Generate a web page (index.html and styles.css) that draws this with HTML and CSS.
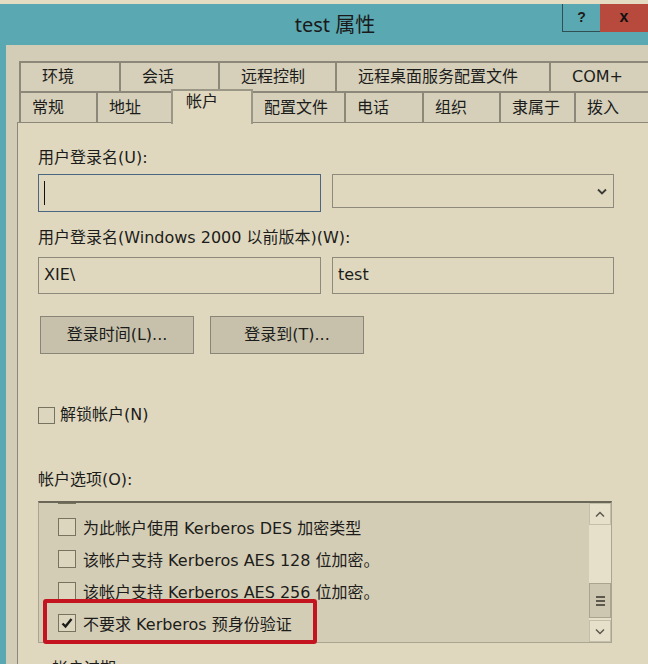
FILE: index.html
```html
<!DOCTYPE html>
<html lang="zh-CN">
<head>
<meta charset="utf-8">
<title>test 属性</title>
<link rel="stylesheet" href="styles.css">
</head>
<body>
<div class="window">
  <div class="topstrip"></div>
  <div class="titlebar">
    <div class="title">test 属性</div>
    <div class="controls">
      <div class="btn-help">?</div>
      <div class="btn-close">x</div>
    </div>
  </div>
  <div class="frame">
    <div class="tabs">
      <div class="tabrow row1">
        <div class="tab w-env">环境</div>
        <div class="tab w-sess">会话</div>
        <div class="tab w-rc">远程控制</div>
        <div class="tab w-rds">远程桌面服务配置文件</div>
        <div class="tab w-com">COM+</div>
      </div>
      <div class="tabrow row2">
        <div class="tab w-gen">常规</div>
        <div class="tab w-addr">地址</div>
        <div class="tab tab-active w-acct">帐户</div>
        <div class="tab w-prof">配置文件</div>
        <div class="tab w-tel">电话</div>
        <div class="tab w-org">组织</div>
        <div class="tab w-mem">隶属于</div>
        <div class="tab w-dial">拨入</div>
      </div>
    </div>
    <div class="panel">
      <div class="label first">用户登录名(U):</div>
      <div class="field-row">
        <div class="input input-focus"><span class="caret"></span></div>
        <div class="input combo">
          <svg class="chev" width="10" height="7" viewBox="0 0 10 7"><path d="M1 1.5 L5 5.5 L9 1.5" fill="none" stroke="#3c3a34" stroke-width="1.8"/></svg>
        </div>
      </div>
      <div class="label second">用户登录名(Windows 2000 以前版本)(W):</div>
      <div class="field-row row-pre">
        <div class="input input-text">XIE\</div>
        <div class="input input-text">test</div>
      </div>
      <div class="button-row">
        <div class="button">登录时间(L)...</div>
        <div class="button">登录到(T)...</div>
      </div>
      <div class="check-row">
        <span class="box"></span><span>解锁帐户(N)</span>
      </div>
      <div class="label options">帐户选项(O):</div>
      <div class="listbox">
        <div class="items">
          <div class="items-inner">
            <div class="item"><span class="box"></span></div>
            <div class="item"><span class="box"></span><span>为此帐户使用 Kerberos DES 加密类型</span></div>
            <div class="item"><span class="box"></span><span>该帐户支持 Kerberos AES 128 位加密。</span></div>
            <div class="item"><span class="box"></span><span>该帐户支持 Kerberos AES 256 位加密。</span></div>
            <div class="item"><span class="box checked"><svg width="16" height="16" viewBox="0 0 16 16"><path d="M3.5 8.5 L6.5 11.5 L12.5 4" fill="none" stroke="#1b1b1b" stroke-width="2.4"/></svg></span><span>不要求 Kerberos 预身份验证</span></div>
          </div>
        </div>
        <div class="scrollbar">
          <div class="sb-btn"><svg width="10" height="7" viewBox="0 0 10 7"><path d="M1 5.5 L5 1.5 L9 5.5" fill="none" stroke="#5c584d" stroke-width="1.5"/></svg></div>
          <div class="sb-track">
            <div class="sb-thumb"><span class="grip"></span><span class="grip"></span><span class="grip"></span></div>
          </div>
          <div class="sb-btn"><svg width="10" height="7" viewBox="0 0 10 7"><path d="M1 1.5 L5 5.5 L9 1.5" fill="none" stroke="#5c584d" stroke-width="1.5"/></svg></div>
        </div>
        <div class="highlight"></div>
      </div>
      <div class="label expire">帐户过期</div>
    </div>
  </div>
</div>
</body>
</html>
```

FILE: styles.css
```css
* { box-sizing: border-box; }
html, body { margin: 0; padding: 0; }
body {
  width: 648px;
  height: 664px;
  overflow: hidden;
  background: #5aa8b1;
  font-family: "DejaVu Sans", "Noto Sans CJK SC", sans-serif;
  font-size: 16px;
  color: #1c1c1a;
}
.window {
  width: 648px;
  height: 664px;
  display: flex;
  flex-direction: column;
  overflow: hidden;
}
.topstrip {
  height: 4px;
  background: #e4dcc3;
  flex: none;
}
.titlebar {
  height: 41px;
  flex: none;
  display: flex;
  background: #5aa8b1;
}
.title {
  flex: 1;
  text-align: center;
  padding-left: 108px;
  padding-top: 7px;
  font-family: "Noto Sans", "Noto Sans CJK SC", sans-serif;
  font-size: 20px;
  line-height: 28px;
  color: #1a1a1a;
}
.controls {
  display: flex;
  align-self: flex-start;
  height: 28px;
}
.btn-help {
  width: 38px;
  height: 28px;
  border-left: 1px solid #2f4f53;
  border-bottom: 1px solid #2f4f53;
  background: #5aa8b1;
  font-family: "Liberation Sans", sans-serif;
  font-weight: bold;
  font-size: 14px;
  line-height: 26px;
  text-align: center;
}
.btn-close {
  width: 48px;
  height: 28px;
  background: #b84a3d;
  font-family: "Liberation Sans", sans-serif;
  font-weight: bold;
  font-size: 16px;
  line-height: 26px;
  text-align: center;
  color: #111;
}
.frame {
  flex: 1;
  margin-left: 6px;
  background: #d3ccb7;
  display: flex;
  flex-direction: column;
}
.tabs {
  padding-top: 16px;
  padding-left: 13px;
}
.tabrow {
  display: flex;
  white-space: nowrap;
}
.tab {
  flex: none;
  border-top: 2px solid #8b8779;
  border-left: 2px solid #8b8779;
  background: #d6d0bb;
  line-height: 28px;
}
.row1 .tab {
  height: 30px;
  padding-left: 21px;
}
.row2 {
  height: 31px;
  align-items: flex-start;
}
.row2 .tab {
  height: 31px;
  padding-left: 11px;
  line-height: 29px;
}
.row2 .tab-active {
  position: relative;
  z-index: 1;
  height: 35px;
  margin-top: -2px;
  padding-left: 13px;
  line-height: 22px;
  background: #dfd8bf;
  border-top: 2px solid #9b9787;
  border-left: 2px solid #9b9787;
  border-right: 2px solid #9b9787;
}
.row2 .tab-active + .tab { border-left: none; }
.w-env { width: 100px; }
.w-sess { width: 99px; }
.w-rc { width: 117px; }
.w-rds { width: 214px; }
.w-com { width: 110px; }
.w-gen { width: 77px; }
.w-addr { width: 75px; }
.w-acct { width: 82px; }
.w-prof { width: 91px; }
.w-tel { width: 78px; }
.w-org { width: 77px; }
.w-mem { width: 75px; }
.w-dial { width: 80px; }
.panel {
  flex: 1;
  margin-left: 11px;
  border-top: 1px solid #8b8779;
  border-left: 1px solid #8b8779;
  background: #dfd8bf;
  padding-left: 20px;
  padding-top: 24px;
}
.label {
  line-height: 22px;
  white-space: nowrap;
}
.label.second { margin-top: 15px; }
.label.options { margin-top: 43px; }
.label.expire { margin-top: 15px; padding-left: 14px; }
.field-row {
  display: flex;
  gap: 11px;
  align-items: flex-start;
  margin-top: 5px;
}
.field-row.row-pre { margin-top: 8px; }
.input {
  border: 1px solid #8e8a7b;
  background: #dfd8bf;
  height: 37px;
  display: flex;
  align-items: center;
}
.input-focus {
  width: 283px;
  height: 38px;
  border: 1px solid #4b6680;
  padding-left: 5px;
}
.caret {
  display: block;
  width: 1px;
  height: 24px;
  background: #111;
}
.combo {
  width: 282px;
  height: 34px;
  justify-content: flex-end;
  padding-right: 6px;
}
.input-text {
  width: 283px;
  padding-left: 5px;
  padding-bottom: 3px;
}
.row-pre .input-text + .input-text { width: 282px; }
.button-row {
  display: flex;
  gap: 16px;
  margin-top: 22px;
  margin-left: 2px;
}
.button {
  width: 154px;
  height: 38px;
  border: 1px solid #8a8677;
  background: #c7c1ab;
  text-align: center;
  line-height: 36px;
}
.check-row {
  display: flex;
  align-items: center;
  gap: 5px;
  margin-top: 50px;
  line-height: 22px;
}
.box {
  flex: none;
  width: 17px;
  height: 17px;
  border: 1px solid #77735f;
  background: #ddd6be;
  display: flex;
  align-items: center;
  justify-content: center;
}
.listbox {
  position: relative;
  width: 574px;
  height: 142px;
  margin-top: 10px;
  border-top: 2px solid #6a6658;
  border-left: 1px solid #aaa591;
  border-right: 1px solid #aaa591;
  border-bottom: 1px solid #aaa591;
  background: #d4cdb6;
  display: flex;
}
.items {
  flex: 1;
  overflow: hidden;
  padding-left: 19px;
}
.items-inner { margin-top: -24px; }
.item {
  height: 32px;
  display: flex;
  align-items: center;
  gap: 7px;
  white-space: nowrap;
}
.item .box { width: 18px; height: 18px; }
.scrollbar {
  width: 22px;
  flex: none;
  display: flex;
  flex-direction: column;
  background: #e6e0ca;
}
.sb-btn {
  height: 22px;
  border: 1px solid #c3bea9;
  display: flex;
  align-items: center;
  justify-content: center;
  background: #e6e0ca;
}
.sb-track {
  flex: 1;
  padding-top: 58px;
}
.sb-thumb {
  height: 35px;
  border: 1px solid #a9a490;
  background: #cdc7b1;
  display: flex;
  flex-direction: column;
  align-items: center;
  justify-content: center;
  gap: 2px;
}
.grip {
  display: block;
  width: 9px;
  height: 2px;
  background: #5c584d;
}
.highlight {
  position: absolute;
  left: 4px;
  top: 96px;
  width: 274px;
  height: 45px;
  border: 4px solid #c4141f;
  border-radius: 3px;
}
```
